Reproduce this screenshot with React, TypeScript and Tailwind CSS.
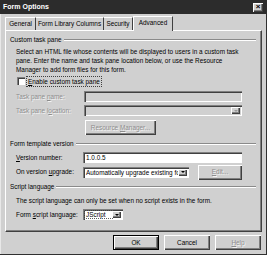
import React from "react";

const raised =
  "shadow-[inset_1px_1px_0_#ffffff,inset_-1px_-1px_0_#404040,inset_-2px_-2px_0_#808080]";
const sunken =
  "shadow-[inset_1px_1px_0_#808080,inset_2px_2px_0_#404040,inset_-1px_-1px_0_#ffffff]";
const disabledText = "text-[#8e8e8e] [text-shadow:1px_1px_0_#f4f4f4]";

function U({ children }: { children: React.ReactNode }) {
  return <span className="underline underline-offset-[1px]">{children}</span>;
}

function Arrow({ disabled }: { disabled?: boolean }) {
  return (
    <div className={`w-[9px] h-full flex items-center justify-center bg-[#d0d0d0] ${raised}`}>
      <div
        className={`w-0 h-0 border-l-[2px] border-r-[2px] border-t-[2px] border-l-transparent border-r-transparent ${
          disabled ? "border-t-[#9a9a9a]" : "border-t-black"
        }`}
      />
    </div>
  );
}

function GroupHeader({ title, mt }: { title: string; mt: string }) {
  return (
    <div className={`flex items-center h-[10px] pl-[4px] pr-[5px] ${mt}`}>
      <span className="whitespace-nowrap leading-[10px]">{title}</span>
      <div className="flex-1 ml-[2px] h-[2px] border-t border-[#8a8a8a] border-b border-b-white" />
    </div>
  );
}

function Button({
  label,
  disabled,
  def,
  w,
}: {
  label: React.ReactNode;
  disabled?: boolean;
  def?: boolean;
  w: string;
}) {
  return (
    <div
      className={`${w} h-[15px] flex items-center justify-center bg-[#d0d0d0] ${
        def ? "border border-black" : ""
      } ${raised} ${disabled ? disabledText : ""}`}
    >
      <span className="leading-[10px]">{label}</span>
    </div>
  );
}

export default function App() {
  return (
    <div
      className="w-[267px] h-[255px] bg-[#d0d0d0] flex flex-col text-[6.4px] text-black whitespace-nowrap overflow-hidden shadow-[inset_-1px_-1px_0_#303030,inset_1px_1px_0_#e8e8e8]"
      style={{ fontFamily: '"Liberation Sans", Arial, sans-serif' }}
    >
      {/* Title bar */}
      <div className="h-[14px] bg-[#2c2c2c] flex items-center pl-[3px] pr-[4px]">
        <span className="text-white font-bold text-[7px] leading-[10px] flex-1">Form Options</span>
        <div className={`w-[10px] h-[9px] bg-[#d0d0d0] flex items-center justify-center ${raised}`}>
          <span className="text-[8px] font-bold leading-[8px]">×</span>
        </div>
      </div>

      {/* Tabs */}
      <div className="h-[16px] flex items-end pl-[5px] relative z-10">
        <div className="w-[31px] h-[13px] flex items-center justify-center border-t border-l border-white border-r border-r-[#404040] rounded-t-[1px]">
          <span className="leading-[10px]">General</span>
        </div>
        <div className="w-[68px] h-[13px] flex items-center justify-center border-t border-white border-r border-r-[#404040]">
          <span className="leading-[10px]">Form Library Columns</span>
        </div>
        <div className="w-[29px] h-[13px] flex items-center justify-center border-t border-white border-r border-r-[#404040]">
          <span className="leading-[10px]">Security</span>
        </div>
        <div className="w-[40px] h-[15px] mb-[-1px] flex items-center justify-center bg-[#d0d0d0] border-t border-l border-white border-r border-r-[#404040] pb-[2px]">
          <span className="leading-[10px]">Advanced</span>
        </div>
      </div>

      {/* Panel */}
      <div className="mx-[5px] h-[202px] flex flex-col border-t border-l border-white shadow-[inset_-1px_-1px_0_#808080] border-r border-b border-r-[#404040] border-b-[#404040]">
        <GroupHeader title="Custom task pane" mt="mt-[4px]" />
        <div className="mt-[2px] pl-[10px] leading-[9px]">
          <div>Select an HTML file whose contents will be displayed to users in a custom task</div>
          <div>pane. Enter the name and task pane location below, or use the Resource</div>
          <div>Manager to add form files for this form.</div>
        </div>
        {/* checkbox */}
        <div className="mt-[2px] h-[10px] flex items-center pl-[11px]">
          <div className={`w-[8px] h-[8px] bg-white ${sunken}`} />
          <span className="ml-[2px] px-[1px] leading-[9px] outline-1 outline-dotted outline-[#404040]">
            <U>E</U>nable custom task pane
          </span>
        </div>
        {/* name */}
        <div className="mt-[5px] h-[11px] flex items-center pl-[10px]">
          <span className={`w-[68px] ${disabledText}`}>
            Task pane <U>n</U>ame:
          </span>
          <div className={`w-[158px] h-full ${sunken}`} />
        </div>
        {/* location */}
        <div className="mt-[3px] h-[11px] flex items-center pl-[10px]">
          <span className={`w-[68px] ${disabledText}`}>
            Task pane l<U>o</U>cation:
          </span>
          <div className={`w-[158px] h-full flex justify-end p-[2px] ${sunken}`}>
            <Arrow disabled />
          </div>
        </div>
        {/* resource manager */}
        <div className="mt-[4px] pl-[79px] flex">
          <Button w="w-[71px]" disabled label={<>Resource <U>M</U>anager...</>} />
        </div>

        <GroupHeader title="Form template version" mt="mt-[4px]" />
        <div className="mt-[3px] h-[11px] flex items-center pl-[10px]">
          <span className="w-[67px]">
            <U>V</U>ersion number:
          </span>
          <div className={`w-[159px] h-full bg-white flex items-center pl-[3px] ${sunken}`}>
            <span className="leading-[9px]">1.0.0.5</span>
          </div>
        </div>
        <div className="mt-[3px] h-[12px] flex items-center pl-[10px]">
          <span className="w-[67px]">
            On version <U>u</U>pgrade:
          </span>
          <div className={`w-[106px] h-[11px] bg-white flex items-center p-[2px] ${sunken}`}>
            <span className="flex-1 overflow-hidden leading-[9px] pl-[1px]">
              Automatically upgrade existing for
            </span>
            <Arrow />
          </div>
          <div className="ml-[9px]">
            <Button w="w-[44px]" disabled label={<><U>E</U>dit...</>} />
          </div>
        </div>

        <GroupHeader title="Script language" mt="mt-[4px]" />
        <div className="mt-[4px] pl-[10px] leading-[9px]">
          The script language can only be set when no script exists in the form.
        </div>
        <div className="mt-[4px] h-[11px] flex items-center pl-[10px]">
          <span className="w-[67px]">
            Form <U>s</U>cript language:
          </span>
          <div className={`w-[40px] h-full bg-white flex items-center p-[2px] ${sunken}`}>
            <span className="flex-1 leading-[7px] pl-[1px] outline-1 outline-dotted outline-[#606060]">JScript</span>
            <Arrow />
          </div>
        </div>
      </div>

      {/* Buttons */}
      <div className="mt-[3px] flex justify-end pr-[6px] gap-[5px]">
        <Button w="w-[46px]" def label="OK" />
        <Button w="w-[46px]" label="Cancel" />
        <Button w="w-[46px]" disabled label={<><U>H</U>elp</>} />
      </div>
    </div>
  );
}
